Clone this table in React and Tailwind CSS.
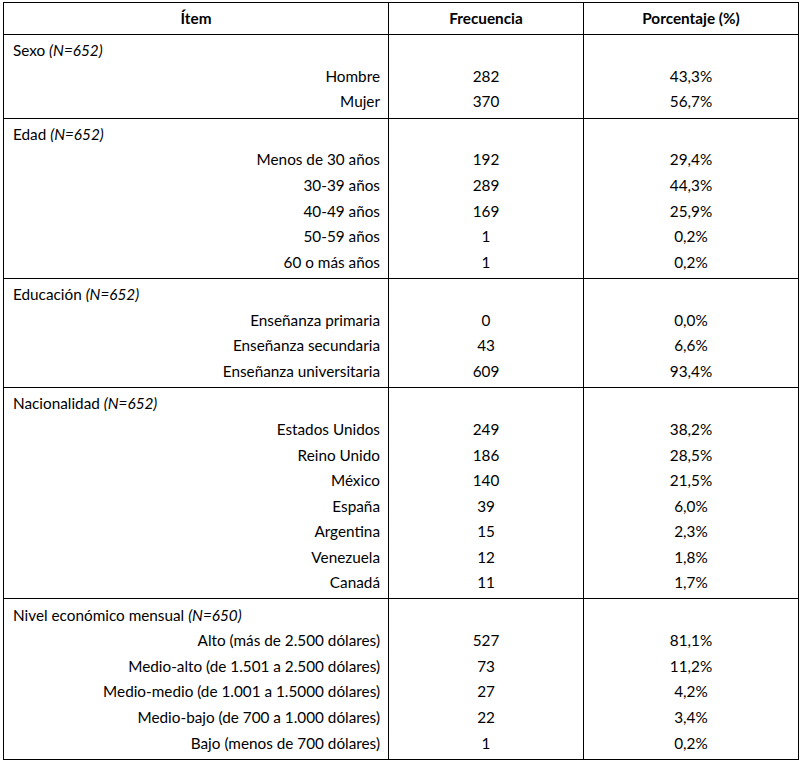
import React from 'react';

const sections = [
  {
    title: 'Sexo',
    n: '(N=652)',
    rows: [
      ['Hombre', '282', '43,3%'],
      ['Mujer', '370', '56,7%'],
    ],
  },
  {
    title: 'Edad',
    n: '(N=652)',
    rows: [
      ['Menos de 30 años', '192', '29,4%'],
      ['30-39 años', '289', '44,3%'],
      ['40-49 años', '169', '25,9%'],
      ['50-59 años', '1', '0,2%'],
      ['60 o más años', '1', '0,2%'],
    ],
  },
  {
    title: 'Educación',
    n: '(N=652)',
    rows: [
      ['Enseñanza primaria', '0', '0,0%'],
      ['Enseñanza secundaria', '43', '6,6%'],
      ['Enseñanza universitaria', '609', '93,4%'],
    ],
  },
  {
    title: 'Nacionalidad',
    n: '(N=652)',
    rows: [
      ['Estados Unidos', '249', '38,2%'],
      ['Reino Unido', '186', '28,5%'],
      ['México', '140', '21,5%'],
      ['España', '39', '6,0%'],
      ['Argentina', '15', '2,3%'],
      ['Venezuela', '12', '1,8%'],
      ['Canadá', '11', '1,7%'],
    ],
  },
  {
    title: 'Nivel económico mensual',
    n: '(N=650)',
    rows: [
      ['Alto (más de 2.500 dólares)', '527', '81,1%'],
      ['Medio-alto (de 1.501 a 2.500 dólares)', '73', '11,2%'],
      ['Medio-medio (de 1.001 a 1.5000 dólares)', '27', '4,2%'],
      ['Medio-bajo (de 700 a 1.000 dólares)', '22', '3,4%'],
      ['Bajo (menos de 700 dólares)', '1', '0,2%'],
    ],
  },
];

const Line = ({ children, className = '' }) => (
  <div className={`h-[25.55px] flex items-center ${className}`}>{children}</div>
);

export default function App() {
  return (
    <div className="bg-white min-h-[763px] pt-[2px] pl-[3px] text-black text-[15.3px] font-['Lato','Liberation_Sans',sans-serif]">
      <div className="w-[796px] border border-black">
        <div className="grid grid-cols-[385px_195px_214px] h-[31px]">
          <div className="border-r border-black flex items-center justify-center font-bold">Ítem</div>
          <div className="border-r border-black flex items-center justify-center font-bold">Frecuencia</div>
          <div className="flex items-center justify-center font-bold">Porcentaje (%)</div>
        </div>
        {sections.map((s) => (
          <div key={s.title} className="grid grid-cols-[385px_195px_214px] border-t border-black">
            <div className="border-r border-black py-[3px]">
              <Line className="pl-[9px]">
                {s.title}&nbsp;<i>{s.n}</i>
              </Line>
              {s.rows.map((r) => (
                <Line key={r[0]} className="justify-end pr-[8px]">{r[0]}</Line>
              ))}
            </div>
            <div className="border-r border-black py-[3px]">
              <Line />
              {s.rows.map((r) => (
                <Line key={r[0]} className="justify-center">{r[1]}</Line>
              ))}
            </div>
            <div className="py-[3px]">
              <Line />
              {s.rows.map((r) => (
                <Line key={r[0]} className="justify-center">{r[2]}</Line>
              ))}
            </div>
          </div>
        ))}
      </div>
    </div>
  );
}
